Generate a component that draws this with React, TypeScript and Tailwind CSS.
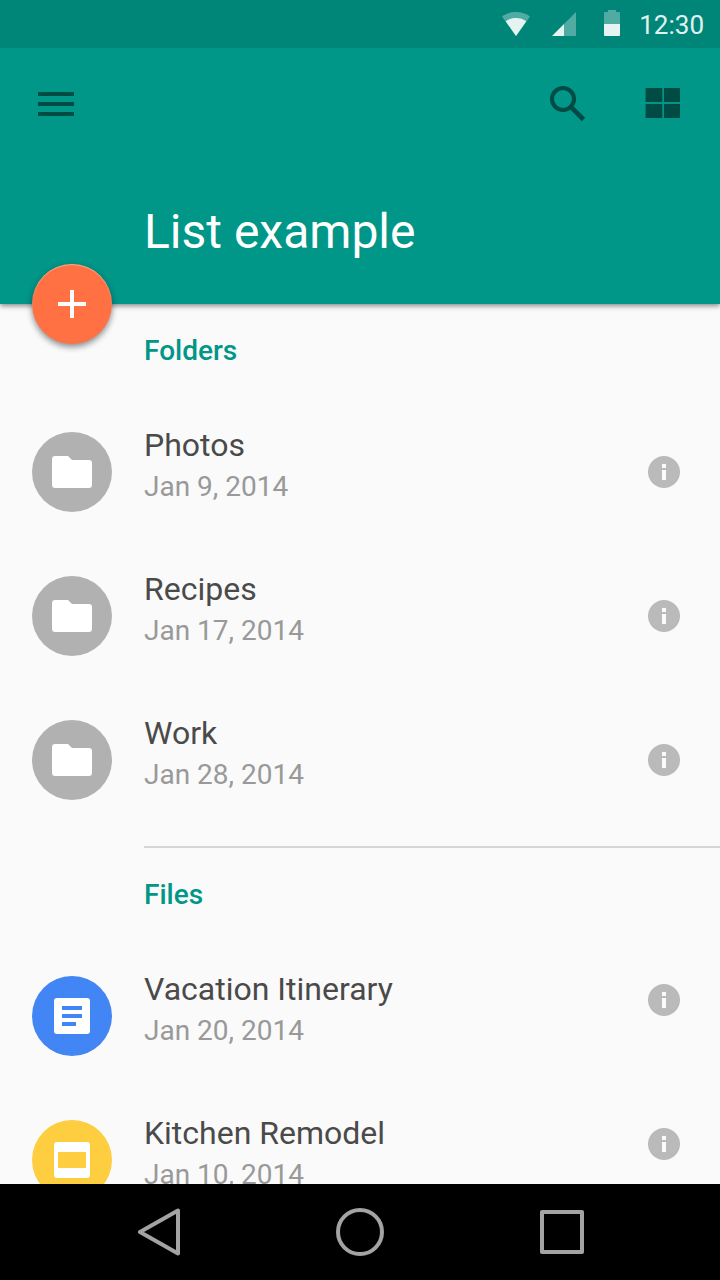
import type { ReactNode } from "react";

type Kind = "folder" | "document" | "slides";

interface Item {
  name: string;
  date: string;
  kind: Kind;
}

const folders: Item[] = [
  { name: "Photos", date: "Jan 9, 2014", kind: "folder" },
  { name: "Recipes", date: "Jan 17, 2014", kind: "folder" },
  { name: "Work", date: "Jan 28, 2014", kind: "folder" },
];

const files: Item[] = [
  { name: "Vacation Itinerary", date: "Jan 20, 2014", kind: "document" },
  { name: "Kitchen Remodel", date: "Jan 10, 2014", kind: "slides" },
];

const avatarColors: Record<Kind, string> = {
  folder: "bg-[#b1b1b1]",
  document: "bg-[#4285f4]",
  slides: "bg-[#ffcd40]",
};

const avatarIcons: Record<Kind, ReactNode> = {
  folder: (
    <svg className="h-8 w-10" viewBox="0 0 40 32" fill="#fff" aria-hidden="true">
      <path d="M3 0h13l4 4h17a3 3 0 0 1 3 3v22a3 3 0 0 1-3 3H3a3 3 0 0 1-3-3V3a3 3 0 0 1 3-3Z" />
    </svg>
  ),
  document: (
    <svg className="size-9" viewBox="0 0 36 36" aria-hidden="true">
      <rect width="36" height="36" rx="3" fill="#fff" />
      <path d="M8 8h20v4H8zM8 16h20v4H8zM8 24h14v4H8z" fill="#4285f4" />
    </svg>
  ),
  slides: (
    <svg className="size-9" viewBox="0 0 36 36" aria-hidden="true">
      <rect width="36" height="36" rx="3" fill="#fff" />
      <rect x="4" y="10" width="28" height="16" rx="1" fill="#ffcd40" />
    </svg>
  ),
};

function StatusBar() {
  return (
    <div className="relative z-20 flex h-12 shrink-0 items-center justify-end bg-[#008679] pr-4 text-[#e0f2f0]">
      <svg className="mr-[22px] h-6 w-7" viewBox="0 0 28 24" fill="#e5f3f1" aria-hidden="true">
        <path d="M14 0C8.600 0 3.800 1.700 0 4.500L14 24 28 4.500C24.200 1.700 19.400 0 14 0Z" opacity=".35" />
        <path d="M14 6C10 6 6.500 7.200 3.700 9.300L14 24 24.300 9.300C21.500 7.200 18 6 14 6Z" />
      </svg>
      <svg className="mr-7 size-6" viewBox="0 0 24 24" fill="#e5f3f1" aria-hidden="true">
        <path d="M24 0v24H12V12Z" opacity=".35" />
        <path d="M12 12v12H0Z" />
      </svg>
      <svg className="mr-[19px] h-7 w-4" viewBox="0 0 16 28" fill="#e5f3f1" aria-hidden="true">
        <path d="M4 0h8v2h3a1 1 0 0 1 1 1v11H0V3a1 1 0 0 1 1-1h3Z" opacity=".35" />
        <path d="M0 14h16v11a1 1 0 0 1-1 1H1a1 1 0 0 1-1-1Z" />
      </svg>
      <time className="pt-0.5 text-[26px] leading-8">12:30</time>
    </div>
  );
}

function Header() {
  return (
    <header className="relative z-10 shrink-0 bg-[#009688] shadow-[0_2px_5px_rgba(0,0,0,0.45)]">
      <div className="flex h-28 items-center px-8 text-[#004b44]">
        <button type="button" aria-label="Open menu" className="grid size-12 place-items-center">
          <svg className="size-12" viewBox="0 0 48 48" fill="currentColor" aria-hidden="true">
            <path d="M6 12h36v4H6zM6 22h36v4H6zM6 32h36v4H6z" />
          </svg>
        </button>
        <button type="button" aria-label="Search" className="ml-auto grid size-12 place-items-center">
          <svg className="size-12" viewBox="0 0 48 48" fill="none" stroke="currentColor" aria-hidden="true">
            <circle cx="19" cy="19" r="11" strokeWidth="4" />
            <path d="m26 26 2.500 2.500" strokeWidth="4" />
            <path d="m28 28 11.500 11.500" strokeWidth="4.600" />
          </svg>
        </button>
        <button type="button" aria-label="Grid view" className="ml-12 grid size-12 place-items-center">
          <svg className="size-12" viewBox="0 0 48 48" fill="currentColor" aria-hidden="true">
            <path d="M5.600 8h16.700v14H5.600zM24 8h16v14H24zM5.600 24h16.700v14H5.600zM24 24h16v14H24z" />
          </svg>
        </button>
      </div>
      <h1 className="mt-11 pb-11 pl-36 text-5xl leading-[56px] text-white">List example</h1>
      <button
        type="button"
        aria-label="Add item"
        className="absolute -bottom-10 left-8 grid size-20 place-items-center rounded-full bg-[#ff7043] shadow-[0_3px_6px_rgba(0,0,0,0.45),inset_0_1px_1px_rgba(255,255,255,0.4)]"
      >
        <svg className="size-7" viewBox="0 0 28 28" fill="#fff" aria-hidden="true">
          <path d="M12 0h4v12h12v4H16v12h-4V16H0v-4h12Z" />
        </svg>
      </button>
    </header>
  );
}

function Row({ item, raised }: { item: Item; raised?: boolean }) {
  return (
    <li className="flex min-h-36 items-start pr-10 pl-8">
      <span className={`mt-8 grid size-20 shrink-0 place-items-center rounded-full ${avatarColors[item.kind]}`}>
        {avatarIcons[item.kind]}
      </span>
      <div className="ml-8 min-w-0 flex-1 pt-6">
        <p className="truncate text-[32px] leading-[42px] text-[#4a4a4a]">{item.name}</p>
        <p className="truncate text-[28px] leading-[42px] text-[#999]">{item.date}</p>
      </div>
      <button
        type="button"
        aria-label={`About ${item.name}`}
        className={`size-8 shrink-0 ${raised ? "mt-10" : "mt-14"}`}
      >
        <svg className="size-8" viewBox="0 0 32 32" aria-hidden="true">
          <circle cx="16" cy="16" r="16" fill="#bababa" />
          <path d="M14 8h4v4h-4zM14 14h4v10h-4z" fill="#fafafa" />
        </svg>
      </button>
    </li>
  );
}

function Section({ title, items, raised }: { title: string; items: Item[]; raised?: boolean }) {
  return (
    <section>
      <h2 className="flex h-24 items-center pb-0.5 pl-36 text-[28px] leading-10 font-medium text-[#009688]">{title}</h2>
      <ul>
        {items.map((item) => (
          <Row key={item.name} item={item} raised={raised} />
        ))}
      </ul>
    </section>
  );
}

function NavigationBar() {
  return (
    <nav aria-label="System" className="grid h-24 shrink-0 grid-cols-3 bg-black px-15 text-[#a3a3a3]">
      <button type="button" aria-label="Back" className="grid place-items-center">
        <svg className="size-12" viewBox="0 0 48 48" fill="none" stroke="currentColor" strokeWidth="4" strokeLinejoin="round" aria-hidden="true">
          <path d="M42 2.500v43L4 24Z" />
        </svg>
      </button>
      <button type="button" aria-label="Home" className="grid place-items-center">
        <svg className="size-12" viewBox="0 0 48 48" fill="none" stroke="currentColor" strokeWidth="4" aria-hidden="true">
          <circle cx="24" cy="24" r="22" />
        </svg>
      </button>
      <button type="button" aria-label="Recent apps" className="grid place-items-center">
        <svg className="size-12" viewBox="0 0 48 48" fill="none" stroke="currentColor" strokeWidth="4" strokeLinejoin="round" aria-hidden="true">
          <rect x="6" y="4" width="40" height="40" />
        </svg>
      </button>
    </nav>
  );
}

export default function App() {
  return (
    <div className="flex h-dvh flex-col bg-[#fafafa] font-['Roboto',sans-serif]">
      <StatusBar />
      <Header />
      <main className="min-h-0 flex-1 overflow-y-auto [scrollbar-width:none]">
        <Section title="Folders" items={folders} />
        <hr className="mt-3.5 ml-36 border-t-2 border-[#d5d5d5]" />
        <Section title="Files" items={files} raised />
      </main>
      <NavigationBar />
    </div>
  );
}
